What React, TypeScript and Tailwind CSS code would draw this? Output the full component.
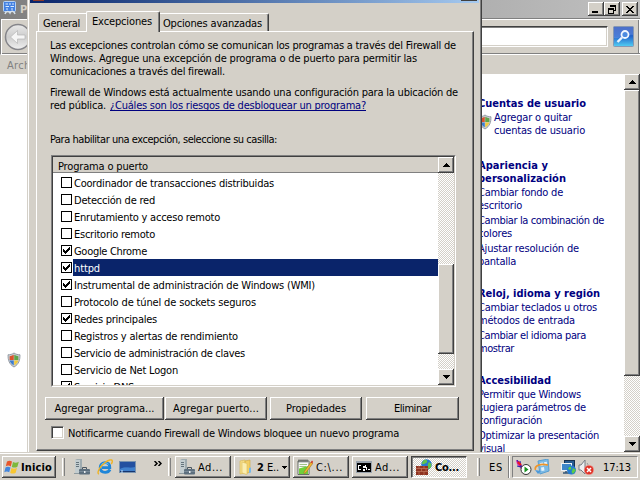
import { useLayoutEffect, useRef, useState, type ReactNode } from "react";

const raised =
  "bg-[#d4d0c8] shadow-[inset_-1px_-1px_#404040,inset_1px_1px_#fff,inset_-2px_-2px_#808080]";
const dither =
  "bg-[repeating-conic-gradient(#fff_0_25%,#d4d0c8_0_50%)] bg-[length:2px_2px]";

/* One line of text, tracked so that it spans exactly w pixels. */
function Line({
  w,
  children,
  className = "",
  link = false,
}: {
  w: number;
  children: string;
  className?: string;
  link?: boolean;
}) {
  const ref = useRef<HTMLSpanElement>(null);
  const [gap, setGap] = useState(0);
  useLayoutEffect(() => {
    const el = ref.current;
    if (!el) return;
    el.style.letterSpacing = "0px";
    setGap((w - el.getBoundingClientRect().width) / children.length);
    el.style.letterSpacing = "";
  }, [w, children]);
  return (
    <span className={"block h-[13px] " + className}>
      <span
        ref={ref}
        className={"inline-block whitespace-nowrap " + (link ? "underline [text-decoration-skip-ink:none]" : "")}
        style={{ letterSpacing: gap }}
      >
        {children}
      </span>
    </span>
  );
}

function Shield({ className }: { className: string }) {
  return (
    <svg viewBox="0 0 16 18" className={className}>
      <path d="M8 1C6 2.5 3.500 3 1.200 3C1 9 2.500 14 8 17C13.500 14 15 9 14.800 3C12.500 3 10 2.500 8 1Z" fill="#c9cdd2" stroke="#8d949d" />
      <path d="M7.700 3C6 4 4.500 4.500 3 4.700V9H7.700Z" fill="#d9532c" />
      <path d="M8.300 3C10 4 11.500 4.500 13 4.700V9H8.300Z" fill="#5fa548" />
      <path d="M3 9.500H7.700V15C5 13.500 3.500 11.500 3 9.500Z" fill="#3c7cd0" />
      <path d="M8.300 9.500H13C12.500 11.500 11 13.500 8.300 15Z" fill="#f3cb3a" />
    </svg>
  );
}

function Arrow({ down = false }: { down?: boolean }) {
  return (
    <svg viewBox="0 0 7 4" className="h-1 w-[7px]" shapeRendering="crispEdges">
      <path d={down ? "M0 0H7V1H6V2H5V3H4V4H3V3H2V2H1V1H0Z" : "M3 0H4V1H5V2H6V3H7V4H0V3H1V2H2V1H3Z"} />
    </svg>
  );
}

function ScrollButton({ down = false }: { down?: boolean }) {
  return (
    <div className={"flex h-4 w-4 shrink-0 items-center justify-center " + raised}>
      <Arrow down={down} />
    </div>
  );
}

function ServerIcon() {
  return (
    <svg viewBox="0 0 16 16" className="h-4 w-4 shrink-0">
      <path d="M1 1L3 0H8V13L6 14H1Z" fill="#9eabb0" />
      <path d="M1 1H6V14H1Z" fill="#c3cdd0" />
      <path d="M2 3.500H5M2 5.500H5M2 7.500H5" stroke="#65747d" />
      <path d="M0 14.500H9" stroke="#8e9a9f" />
      <path d="M8.500 10V8.500H12.500V10" fill="none" stroke="#4a5660" />
      <rect x="5" y="10" width="11" height="5.500" rx="1" fill="#5d6f7e" />
      <path d="M5 12.500H16" stroke="#7f909d" strokeWidth=".8" />
      <rect x="10" y="12" width="1.500" height="2" fill="#eceff1" />
    </svg>
  );
}

function IEIcon() {
  return (
    <svg viewBox="0 0 16 16" className="h-4 w-4 shrink-0">
      <path d="M13 10.500C12 12.500 10.500 13.300 8.200 13.300C5 13.300 3.200 11.300 3.200 8.500C3.200 5.700 5.300 3.700 8.200 3.700C11.200 3.700 12.800 5.600 12.800 8.700H5" fill="none" stroke="#1f86d8" strokeWidth="2.800" />
      <path d="M4.500 5.500C6 3.800 9.500 3.300 11.500 5.200" fill="none" stroke="#79cdf7" />
      <path d="M1.800 15.200C-.5 13.500 3 7.500 7.500 4C11.500 .8 15 0 15.300 2C15.400 2.800 15 4 14.300 5" fill="none" stroke="#f0b323" strokeWidth="1.400" />
    </svg>
  );
}

function DesktopIcon() {
  return (
    <svg viewBox="0 0 17 14" className="h-[14px] w-[17px] shrink-0">
      <rect x=".5" y="1.500" width="16" height="11" fill="#2b62b4" stroke="#7a93ae" />
      <path d="M1 2H16V8C10 8 7 6 1 9Z" fill="#2350a0" />
      <path d="M1 9C7 6 10 9 16 7V11H1Z" fill="#4080cc" />
      <path d="M1 11.500H16" stroke="#15356f" />
      <path d="M3 10V13" stroke="#c4e4ff" />
    </svg>
  );
}

function WindowsFlag() {
  return (
    <svg viewBox="0 0 16 16" className="h-4 w-4 shrink-0">
      <path d="M3 2.500C5 1.200 6.500 1.500 8 2.600L6.800 7.500C5 6.300 3.500 6.400 1.800 7.300Z" fill="#e8562a" />
      <path d="M9 3.100C11 4.200 12.700 4 14.800 2.800L13.400 7.700C11.600 8.800 9.800 8.900 7.800 7.900Z" fill="#7db83a" />
      <path d="M1.500 8.400C3.300 7.300 4.900 7.500 6.500 8.600L5.200 13.300C3.500 12.200 2 12.300 .3 13.200Z" fill="#4386dd" />
      <path d="M7.500 9.100C9.500 10.100 11.200 9.900 13 8.800L11.700 13.700C9.900 14.800 8.200 14.800 6.200 13.900Z" fill="#f8c631" />
    </svg>
  );
}

function FolderIcon() {
  return (
    <svg viewBox="0 0 16 16" className="h-4 w-4 shrink-0">
      <path d="M2 2L7 1V14L2 15Z" fill="#f6df8a" stroke="#d8b54e" strokeWidth=".6" />
      <path d="M7 2L12 1V13L7 15Z" fill="#f2cf66" stroke="#d0a73c" strokeWidth=".6" />
      <path d="M4 3L9 4.500V15.500L4 14Z" fill="#fbeeb0" stroke="#dcbc5a" strokeWidth=".6" />
      <path d="M11 9L13 8.500V13.500L11 14Z" fill="#76b8ea" />
    </svg>
  );
}

function NotepadIcon() {
  return (
    <svg viewBox="0 0 16 16" className="h-4 w-4 shrink-0">
      <path d="M1 2H12V15.500H1Z" fill="#fafafa" stroke="#59615a" strokeWidth=".9" />
      <path d="M2.500 5.500H10M2.500 7.500H9" stroke="#8ab56a" strokeWidth=".8" />
      <path d="M2 9.500L11 7V15H2Z" fill="#6fd03a" />
      <path d="M2 .5V3.500M4 .5V3.500M6 .5V3.500M8 .5V3.500M10 .5V3.500" stroke="#3c4446" strokeWidth=".9" />
      <path d="M7 13L14 3L16 4.200L9 13.500L7 14.500Z" fill="#f2b630" stroke="#946d20" strokeWidth=".5" />
      <path d="M13.500 3.500L15 1.500L16 2.500L15.300 4.500Z" fill="#d43a2a" />
    </svg>
  );
}

function ConsoleIcon() {
  return (
    <svg viewBox="0 0 16 14" className="h-[14px] w-4 shrink-0" shapeRendering="crispEdges">
      <rect x="0" y="1" width="16" height="12" fill="#9aa3ad" />
      <rect x="1" y="3" width="14" height="9" fill="#000" />
      <path d="M5 5.500H2.500V9.500H5M7 6H8V7H7ZM7 9H8V10H7ZM9.500 5V7.500H10.500V10M12 9.500H14" fill="none" stroke="#fff" />
    </svg>
  );
}

function FirewallIcon({ className }: { className: string }) {
  return (
    <svg viewBox="0 0 16 16" className={className}>
      <circle cx="10.500" cy="5.500" r="5.300" fill="#2579cf" />
      <path d="M8 1C11 0 12 2 10.500 4C8.500 4 8 6 6 5C6 3 7 2 8 1ZM13 3L15.500 5C15.500 8 14 10 12.500 10C12 8 11 6 13 3Z" fill="#63c34a" />
      <rect x="0" y="7" width="12" height="9" fill="#8f3220" />
      <path d="M0 9.500H12M0 12.500H12M3 7V9.500M8 7V9.500M5.500 9.500V12.500M10 9.500V12.500M3 12.500V16M8 12.500V16" stroke="#c98467" strokeWidth=".6" />
    </svg>
  );
}

function BackWindow() {
  return (
    <div className="flex h-[452px] w-[640px] flex-col bg-[#d4d0c8]">
      <div className="flex h-[18px] shrink-0 items-start justify-between bg-linear-to-r from-[#808080] to-[#c0c0c0]">
        <div className="flex items-center gap-[3px] pl-[3px] font-bold text-[#d4d0c8]">
          <svg viewBox="0 0 14 16" className="h-4 w-[14px]">
            <rect x=".5" y="1.500" width="12" height="10" rx="1" fill="#4381e2" stroke="#b6d2f5" />
            <path d="M2.500 4H5M6 4H8M9 4H11M2.500 6.500H6M7.500 6.500H11M3 9H5M8 9H10" stroke="#dcecff" strokeWidth="1" />
            <path d="M2 14C3 10.500 6 11 7 13C8 10.500 11 10.500 12 14" fill="none" stroke="#d7e1ea" strokeWidth="1.500" />
          </svg>
          <span className="pt-[2px]">Panel de control</span>
        </div>
        <div className="flex pt-[2px] pr-[2px]">
          <div className={"flex h-[14px] w-4 items-end pb-[3px] pl-1 " + raised}>
            <div className="h-[2px] w-[6px] bg-black" />
          </div>
          <div className={"mr-[2px] flex h-[14px] w-4 items-center justify-center " + raised}>
            <svg viewBox="0 0 8 9" className="h-[9px] w-2" fill="none" stroke="#000" shapeRendering="crispEdges">
              <path d="M2.500 2V.5H7.500V5.500H6M2 1.500H8M.5 3.500H5.500V8.500H.5ZM0 4.500H6" />
            </svg>
          </div>
          <div className={"flex h-[14px] w-4 items-center justify-center " + raised}>
            <svg viewBox="0 0 8 7" className="h-[7px] w-2" shapeRendering="crispEdges">
              <path d="M0 0H2V1H3V2H5V1H6V0H8V1H7V2H6V3H5V4H6V5H7V6H8V7H6V6H5V5H3V6H2V7H0V6H1V5H2V4H3V3H2V2H1V1H0Z" />
            </svg>
          </div>
        </div>
      </div>
      <div className="flex h-[37px] shrink-0 items-center justify-between border-y border-l border-t-[#808080] border-b-white border-l-[#808080] pr-[6px] pl-[3px] shadow-[inset_0_1px_#fff,inset_1px_0_#fff,inset_0_-1px_#808080,inset_-1px_0_#fff,inset_-2px_0_#808080]">
        <svg viewBox="0 0 28 28" className="h-7 w-7">
          <defs>
            <linearGradient id="nav" x2="0" y2="1">
              <stop offset="0" stopColor="#e9e9e9" />
              <stop offset=".5" stopColor="#cccccc" />
              <stop offset="1" stopColor="#f0f0f0" />
            </linearGradient>
          </defs>
          <circle cx="14" cy="14" r="12.500" fill="url(#nav)" stroke="#85858a" strokeWidth="1.500" />
          <path d="M6.500 14L13.500 7.500V12H21V16H13.500V20.500Z" fill="#f6f6f6" stroke="#b6b6b6" strokeWidth=".7" />
        </svg>
        <div className="flex items-center gap-[5px]">
          <div className="h-[21px] w-[200px] border border-t-[#404040] border-r-white border-b-white border-l-[#808080] bg-white shadow-[inset_0_1px_#808080,inset_-1px_-1px_#d4d0c8]" />
          <svg viewBox="0 0 21 21" className="h-[21px] w-[21px]">
            <defs>
              <linearGradient id="find" x2="0" y2="1">
                <stop offset="0" stopColor="#2a50b4" />
                <stop offset=".5" stopColor="#2466cc" />
                <stop offset="1" stopColor="#52d0f4" />
              </linearGradient>
            </defs>
            <rect x=".5" y=".5" width="20" height="20" rx="1" fill="url(#find)" stroke="#8798b2" />
            <path d="M1 1H20V9C13 8 8 13 1 12Z" fill="#8ea8ee" opacity=".35" />
            <path d="M9 11.500L4.500 16" stroke="#e8f4ff" strokeWidth="2.400" />
            <circle cx="12" cy="8.500" r="3.500" fill="#4c8be0" stroke="#f2f8ff" strokeWidth="1.800" />
          </svg>
        </div>
      </div>
      <div className="h-[19px] shrink-0 pt-1 pl-[7px] text-[#808080]">
        <Line w={39}>Archivo</Line>
      </div>
      <div className="flex min-h-0 flex-1 bg-white">
        <div className="w-[478px] pt-[278px] pl-[7px]">
          <Shield className="h-4 w-[14px]" />
        </div>
        <div className="w-[146px] shrink-0 overflow-hidden pt-[23px] text-[#00007f]">
          <Line w={108} className="font-bold">Cuentas de usuario</Line>
          <div className="mt-px flex gap-[2px]">
            <Shield className="mt-[3px] h-4 w-[14px]" />
            <div>
              <Line w={78}>Agregar o quitar</Line>
              <Line w={91}>cuentas de usuario</Line>
            </div>
          </div>
          <div className="mt-[22px]">
            <Line w={70} className="font-bold">Apariencia y</Line>
            <Line w={88} className="font-bold">personalización</Line>
            <Line w={85} className="mt-px">Cambiar fondo de</Line>
            <Line w={44}>escritorio</Line>
            <Line w={126} className="mt-[2px]">Cambiar la combinación de</Line>
            <Line w={34}>colores</Line>
            <Line w={101} className="mt-[2px]">Ajustar resolución de</Line>
            <Line w={38}>pantalla</Line>
          </div>
          <div className="mt-[19px]">
            <Line w={122} className="font-bold">Reloj, idioma y región</Line>
            <Line w={119} className="mt-px">Cambiar teclados u otros</Line>
            <Line w={97}>métodos de entrada</Line>
            <Line w={108} className="mt-[2px]">Cambiar el idioma para</Line>
            <Line w={36}>mostrar</Line>
          </div>
          <div className="mt-[19px]">
            <Line w={73} className="font-bold">Accesibilidad</Line>
            <Line w={103} className="mt-px">Permitir que Windows</Line>
            <Line w={108}>sugiera parámetros de</Line>
            <Line w={64}>configuración</Line>
            <Line w={121} className="mt-[2px]">Optimizar la presentación</Line>
            <Line w={27}>visual</Line>
          </div>
        </div>
        <div className={"flex w-4 flex-col justify-between " + dither}>
          <div>
            <ScrollButton />
            <div className={"h-[286px] w-4 " + raised} />
          </div>
          <ScrollButton down />
        </div>
      </div>
    </div>
  );
}

const programs: [string, number, boolean][] = [
  ["Coordinador de transacciones distribuidas", 200, false],
  ["Detección de red", 81, false],
  ["Enrutamiento y acceso remoto", 146, false],
  ["Escritorio remoto", 81, false],
  ["Google Chrome", 73, true],
  ["httpd", 26, true],
  ["Instrumental de administración de Windows (WMI)", 241, true],
  ["Protocolo de túnel de sockets seguros", 182, false],
  ["Redes principales", 83, true],
  ["Registros y alertas de rendimiento", 164, false],
  ["Servicio de administración de claves", 171, false],
  ["Servicio de Net Logon", 104, false],
  ["Servicio DNS", 60, true],
];

function ProgramRow({ name, w, on, selected }: { name: string; w: number; on: boolean; selected: boolean }) {
  return (
    <div className="flex h-[17px] shrink-0 items-center gap-px pl-2">
      <div className="flex h-[11px] w-[11px] items-center justify-center border border-black bg-white">
        {on && (
          <svg viewBox="0 0 7 7" className="h-[7px] w-[7px]" shapeRendering="crispEdges">
            <path d="M0 2H1V3H2V4H3V3H4V2H5V1H6V0H7V3H6V4H5V5H4V6H3V7H2V6H1V5H0Z" />
          </svg>
        )}
      </div>
      <div className={"h-full flex-1 pt-[3px] pl-px " + (selected ? "bg-[#0a246a] text-white" : "")}>
        <Line w={w}>{name}</Line>
      </div>
    </div>
  );
}

function PushButton({ className, w, children }: { className: string; w: number; children: string }) {
  return (
    <button className={"flex h-[23px] items-center justify-center " + raised + " " + className}>
      <Line w={w}>{children}</Line>
    </button>
  );
}

function FirewallDialog() {
  return (
    <div className="absolute top-0 left-[27px] flex h-[452px] w-[455px] flex-col border-r border-[#404040] bg-[#d4d0c8] text-black shadow-[inset_-1px_0_#808080,inset_1px_0_#d4d0c8,inset_2px_0_#fff]">
      <div className="mr-[2px] ml-[3px] flex h-[3px] shrink-0 justify-between overflow-hidden bg-linear-to-r from-[#0a246a] to-[#a6caf0] pr-[2px] pl-[3px]">
        <div className="h-px w-[11px] bg-[#8b3a2b]" />
        <div className="h-px w-4 bg-[#404040]" />
      </div>
      <div className="flex h-7 shrink-0 items-end pl-[11px]">
        <div className="h-[18px] w-[48px] rounded-tl-[2px] border-t border-l border-white pt-[3px] pl-[4px]">
          <Line w={37}>General</Line>
        </div>
        <div className="z-10 -mb-px h-[21px] w-[74px] rounded-t-[2px] border-t border-r border-l border-white border-r-[#404040] bg-[#d4d0c8] pt-[3px] pl-[5px] shadow-[inset_-1px_0_#808080]">
          <Line w={60}>Excepciones</Line>
        </div>
        <div className="h-[18px] w-[109px] rounded-tr-[2px] border-t border-r border-t-white border-r-[#404040] pt-[3px] pl-[3px] shadow-[inset_-1px_0_#808080]">
          <Line w={99}>Opciones avanzadas</Line>
        </div>
      </div>
      <div className="ml-[9px] flex h-[420px] w-[438px] shrink-0 flex-col border border-t-white border-r-[#404040] border-b-[#404040] border-l-white pt-[7px] pl-[8px] shadow-[inset_-1px_-1px_#808080]">
        <div className="pl-[5px]">
          <Line w={406}>Las excepciones controlan cómo se comunican los programas a través del Firewall de</Line>
          <Line w={367}>Windows. Agregue una excepción de programa o de puerto para permitir las</Line>
          <Line w={175}>comunicaciones a través del firewall.</Line>
          <Line w={408} className="mt-2">Firewall de Windows está actualmente usando una configuración para la ubicación de</Line>
          <div className="flex gap-[4px]">
            <Line w={56}>red pública.</Line>
            <Line w={256} link className="text-[#00007f]">¿Cuáles son los riesgos de desbloquear un programa?</Line>
          </div>
          <Line w={227} className="mt-[21px]">Para habilitar una excepción, seleccione su casilla:</Line>
        </div>
        <div className="mt-[9px] ml-[6px] flex h-[232px] w-[405px] shrink-0 border border-t-[#808080] border-r-white border-b-white border-l-[#808080] bg-white">
          <div className="flex w-full border border-t-[#404040] border-r-[#d4d0c8] border-b-[#d4d0c8] border-l-[#404040]">
            <div className="flex flex-1 flex-col overflow-hidden">
              <div className="h-4 shrink-0 border-b border-[#808080] bg-[#d4d0c8] pt-[3px] pl-[5px]">
                <Line w={90}>Programa o puerto</Line>
              </div>
              <div className="flex flex-col pt-px">
                {programs.map(([name, w, on], i) => (
                  <ProgramRow key={name} name={name} w={w} on={on} selected={i === 5} />
                ))}
              </div>
            </div>
            <div className={"flex w-4 flex-col " + dither}>
              <ScrollButton />
              <div className="h-[91px]" />
              <div className={"h-[90px] " + raised} />
              <div className="flex-1" />
              <ScrollButton down />
            </div>
          </div>
        </div>
        <div className="mt-[10px] flex">
          <PushButton className="w-[119px]" w={100}>Agregar programa...</PushButton>
          <PushButton className="ml-px w-[102px]" w={86}>Agregar puerto...</PushButton>
          <PushButton className="ml-[3px] w-[92px]" w={60}>Propiedades</PushButton>
          <PushButton className="ml-1 w-[93px]" w={37}>Eliminar</PushButton>
        </div>
        <label className="mt-[6px] flex items-start gap-[4px] pl-[6px]">
          <span className="h-[13px] w-[13px] border border-t-[#808080] border-r-white border-b-white border-l-[#808080] bg-white shadow-[inset_1px_1px_#404040,inset_-1px_-1px_#d4d0c8]" />
          <Line w={331} className="mt-px">Notificarme cuando Firewall de Windows bloquee un nuevo programa</Line>
        </label>
      </div>
    </div>
  );
}

function Grip() {
  return <div className="h-[18px] w-[3px] shrink-0 border-r border-l border-r-[#808080] border-l-white" />;
}

function TaskButton({ icon, children }: { icon: ReactNode; children: ReactNode }) {
  return (
    <div className={"mr-[3px] flex h-[22px] w-14 shrink-0 items-center gap-[3px] overflow-hidden pl-1 " + raised}>
      {icon}
      {children}
    </div>
  );
}

function Taskbar() {
  return (
    <div className="relative z-20 flex h-7 w-[640px] shrink-0 items-center bg-[#d4d0c8] pt-[2px] pl-[2px] shadow-[inset_0_1px_#d4d0c8,inset_0_2px_#fff]">
      <div className={"flex h-[22px] w-[54px] shrink-0 items-center gap-px pl-[2px] font-bold " + raised}>
        <WindowsFlag />
        <Line w={31}>Inicio</Line>
      </div>
      <div className="flex w-[113px] shrink-0 items-center pl-[6px]">
        <Grip />
        <div className="ml-[9px]"><ServerIcon /></div>
        <div className="ml-[7px]"><IEIcon /></div>
        <div className="ml-[6px]"><DesktopIcon /></div>
        <svg viewBox="0 0 8 5" className="mb-[7px] ml-[18px] h-[5px] w-2 shrink-0" fill="none" stroke="#000" strokeWidth="1.500">
          <path d="M.5 0L3 2.500L.5 5M4.500 0L7 2.500L4.500 5" />
        </svg>
        <div className="ml-[6px]"><Grip /></div>
      </div>
      <div className="flex shrink-0 pl-[6px]">
        <TaskButton icon={<ServerIcon />}><Line w={25}>Ad...</Line></TaskButton>
        <TaskButton icon={<FolderIcon />}>
          <div className="flex items-center gap-[3px]">
            <Line w={7} className="font-bold">2</Line>
            <Line w={12}>E..</Line>
            <svg viewBox="0 0 5 3" className="h-[3px] w-[5px] shrink-0" shapeRendering="crispEdges"><path d="M0 0H5L2.500 3Z" /></svg>
          </div>
        </TaskButton>
        <TaskButton icon={<NotepadIcon />}><Line w={27}>C:\...</Line></TaskButton>
        <TaskButton icon={<ConsoleIcon />}><Line w={25}>Ad...</Line></TaskButton>
        <div className={"flex h-[22px] w-14 items-center gap-[3px] border border-t-[#404040] border-r-white border-b-white border-l-[#404040] pl-1 font-bold shadow-[inset_1px_1px_#808080] " + dither}>
          <FirewallIcon className="h-4 w-4 shrink-0" />
          <Line w={24} className="mt-px">Co...</Line>
        </div>
      </div>
      <div className="ml-[10px]"><Grip /></div>
      <Line w={14} className="ml-[9px]">ES</Line>
      <div className="ml-[5px] h-[22px] w-[2px] border-l border-[#808080] bg-white" />
      <div className="ml-[2px] flex h-[22px] w-[126px] items-center border border-t-[#808080] border-r-white border-b-white border-l-[#808080] pl-[3px]">
        <svg viewBox="0 0 16 16" className="h-4 w-4 shrink-0">
          <path d="M0 1L3 2L8 10L6 11L1 5Z" fill="#d81ca0" />
          <path d="M1 1L7 10M4 2L5 8L1 7" fill="none" stroke="#2020b0" />
          <path d="M2 3L5 6" stroke="#f01818" strokeWidth="2" />
          <circle cx="10" cy="10.500" r="5" fill="#fff" stroke="#333" />
          <path d="M8.500 7.500L12.500 10.500L8.500 13.500Z" fill="#16901f" />
        </svg>
        <svg viewBox="0 0 16 16" className="ml-[2px] h-4 w-4 shrink-0">
          <path d="M4 2L14 0L15 12L6 15Z" fill="#7dbbe6" stroke="#5a9fd0" />
          <path d="M6 4L9 3.500L9.500 6.500L6.500 7ZM10 3.200L12.800 2.800L13 6L10.500 6.500ZM7 8.500L10 8L10.500 11.500L7.500 12Z" fill="#e6f3fb" />
          <path d="M1.500 11C0 7 6 4 14 6" fill="none" stroke="#ef9528" strokeWidth="1.600" />
          <path d="M1 11L7 12L4 15Z" fill="#4c9adb" />
        </svg>
        <svg viewBox="0 0 16 16" className="ml-[10px] h-4 w-4 shrink-0">
          <rect x="4.500" y="1.500" width="10" height="8" fill="#265b91" stroke="#16304f" />
          <rect x="1.500" y="4.500" width="10" height="7" fill="#3c86c9" stroke="#eef3f7" />
          <path d="M3 14H9M6 12V14" stroke="#335577" strokeWidth="1.500" />
          <circle cx="11.500" cy="11" r="4.500" fill="#247bd2" />
          <path d="M9 8C12 7 12 10 10 11L8 10ZM13 9L16 11L13 15L11.500 13Z" fill="#5dcc46" />
        </svg>
        <svg viewBox="0 0 16 16" className="ml-[2px] h-4 w-4 shrink-0">
          <path d="M1 6H3L7 1V15L3 11H1Z" fill="#eef0f2" stroke="#767c83" />
          <path d="M9 4C10 5 10 6 10 7" fill="none" stroke="#8c9298" />
          <circle cx="11" cy="11" r="4.800" fill="#df3328" stroke="#f2b3aa" strokeWidth=".6" />
          <path d="M9 9L13 13M13 9L9 13" stroke="#fff" strokeWidth="1.500" />
        </svg>
        <Line w={28} className="ml-[9px]">17:13</Line>
      </div>
    </div>
  );
}

export default function App() {
  return (
    <div className="flex h-[480px] w-[640px] flex-col overflow-hidden bg-[#d4d0c8] font-['DejaVu_Sans_Condensed','DejaVu_Sans',sans-serif] text-[11px] leading-[13px] [font-stretch:condensed]">
      <div className="relative h-[452px] shrink-0 overflow-hidden">
        <BackWindow />
        <FirewallDialog />
      </div>
      <Taskbar />
    </div>
  );
}
